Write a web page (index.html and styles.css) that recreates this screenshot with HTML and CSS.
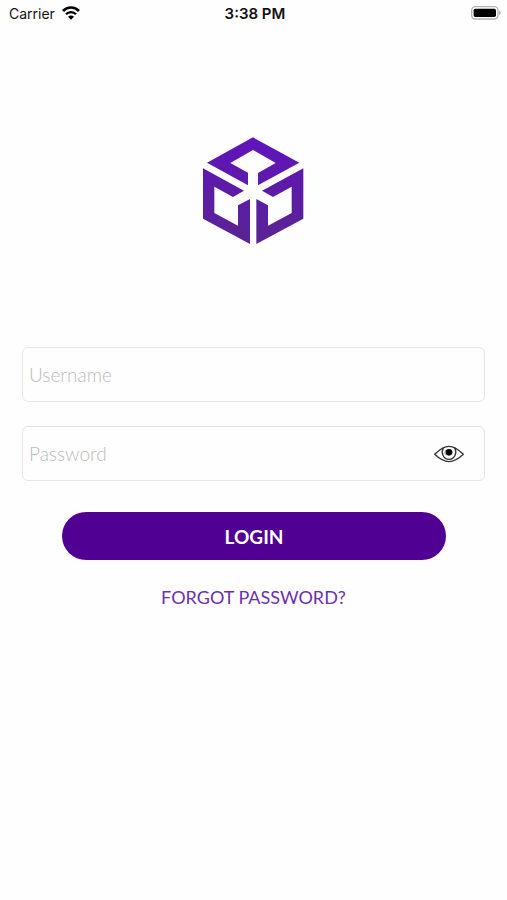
FILE: index.html
```html
<!DOCTYPE html>
<html lang="en">
<head>
<meta charset="utf-8">
<meta name="viewport" content="width=device-width, initial-scale=1">
<title>Login</title>
<link rel="stylesheet" href="styles.css">
</head>
<body>
<header class="status">
  <div class="carrier">
    <span>Carrier</span>
    <svg class="wifi" viewBox="0 0 54 42" aria-hidden="true">
      <path d="M3 15 C16 1 38 1 51 15" fill="none" stroke="#000" stroke-width="8"/>
      <path d="M12 25 C20 16 34 16 42 25" fill="none" stroke="#000" stroke-width="7"/>
      <path d="M27 41 L18 32 C23 27 31 27 36 32 Z"/>
    </svg>
  </div>
  <time class="clock">3:38 PM</time>
  <svg class="battery" viewBox="0 0 90 42" aria-hidden="true">
    <rect x="2" y="2" width="79" height="37" rx="11" fill="#fff" stroke="#b4b4b4" stroke-width="4"/>
    <rect x="8" y="8" width="67" height="25" rx="5"/>
    <path d="M84 14 C91 16 91 25 84 27 Z" fill="#b4b4b4"/>
  </svg>
</header>
<main class="page">
  <svg class="logo" viewBox="38 35 306 324" role="img" aria-label="Logo">
    <defs>
      <linearGradient id="violet" gradientUnits="userSpaceOnUse" x1="188" y1="36" x2="188" y2="356">
        <stop offset="0" stop-color="#6013bd"/>
        <stop offset="1" stop-color="#5a2492"/>
      </linearGradient>
    </defs>
    <g fill="url(#violet)">
      <path d="M188 36 L327 112 L203 180 V143 L256 113 L188 74 L120 113 L173 142 V180 L50 112 Z"/>
      <path d="M38 129 L161 196 L128 215 L72 184 V263 L143 301 V240 L179 221 V356 L38 280 Z"/>
      <path d="M339 129 L215 196 L248 215 L304 184 V263 L233 301 V240 L198 221 V356 L339 280 Z"/>
    </g>
  </svg>
  <form class="form">
    <div class="field">
      <input type="text" placeholder="Username" aria-label="Username">
    </div>
    <div class="field">
      <input type="password" placeholder="Password" aria-label="Password">
      <button class="reveal" type="button" aria-label="Show password">
        <svg viewBox="0 0 90 54" aria-hidden="true">
          <g fill="none" stroke="#333" stroke-width="4">
            <path d="M2 28 C20 10 34 4 45 4 C56 4 70 10 88 28 C70 45 56 50 45 50 C34 50 20 45 2 28 Z"/>
            <path d="M28 8 C20 24 28 43 45 43 C62 43 70 24 62 8"/>
          </g>
          <circle cx="45" cy="22" r="10" fill="#000"/>
          <path d="M36 14 A12 12 0 0 0 36 31" fill="none" stroke="#777" stroke-width="2"/>
        </svg>
      </button>
    </div>
    <button class="login" type="submit">LOGIN</button>
    <a class="forgot" href="#">FORGOT PASSWORD?</a>
  </form>
</main>
</body>
</html>
```
FILE: styles.css
```css
* {
  box-sizing: border-box;
}

body {
  margin: 0;
  background: #fefefe;
  font-family: Lato, sans-serif;
}

.status {
  display: grid;
  grid-template-columns: 1fr auto 1fr;
  align-items: center;
  height: 26px;
  padding: 0 6px 0 9px;
  font-family: Inter, sans-serif;
  font-size: 14px;
  color: #111;
}

.carrier {
  display: flex;
  align-items: center;
  gap: 6px;
}

.wifi {
  width: 20px;
  height: 14px;
}

.clock {
  font-size: 15px;
  font-weight: 600;
}

.battery {
  justify-self: end;
  width: 30px;
  height: 14px;
}

.page {
  display: flex;
  flex-direction: column;
  align-items: center;
  padding: 111px 22px 0;
}

.logo {
  width: 102px;
  height: 108px;
}

.form {
  display: flex;
  flex-direction: column;
  align-self: stretch;
  margin-top: 102px;
}

.field {
  display: flex;
  align-items: center;
  height: 55px;
  margin-bottom: 24px;
  padding: 0 20px 0 6px;
  border: 1px solid #e6e6e6;
  border-radius: 6px;
}

.field input {
  flex: 1;
  min-width: 0;
  padding: 0;
  border: 0;
  outline: 0;
  background: transparent;
  font: 300 19px Lato, sans-serif;
  color: #222;
}

.field input::placeholder {
  color: #bbb;
  opacity: 1;
}

.reveal {
  padding: 0;
  border: 0;
  background: none;
}

.reveal svg {
  display: block;
  width: 30px;
  height: 18px;
}

.login {
  height: 48px;
  margin: 7px 39px 0 40px;
  border: 0;
  border-radius: 24px;
  background: #500093;
  color: #fff;
  font: 700 19px Lato, sans-serif;
}

.forgot {
  align-self: center;
  margin-top: 25px;
  font-size: 18px;
  font-weight: 400;
  line-height: 24px;
  color: #6c2fad;
  text-decoration: none;
}
```
